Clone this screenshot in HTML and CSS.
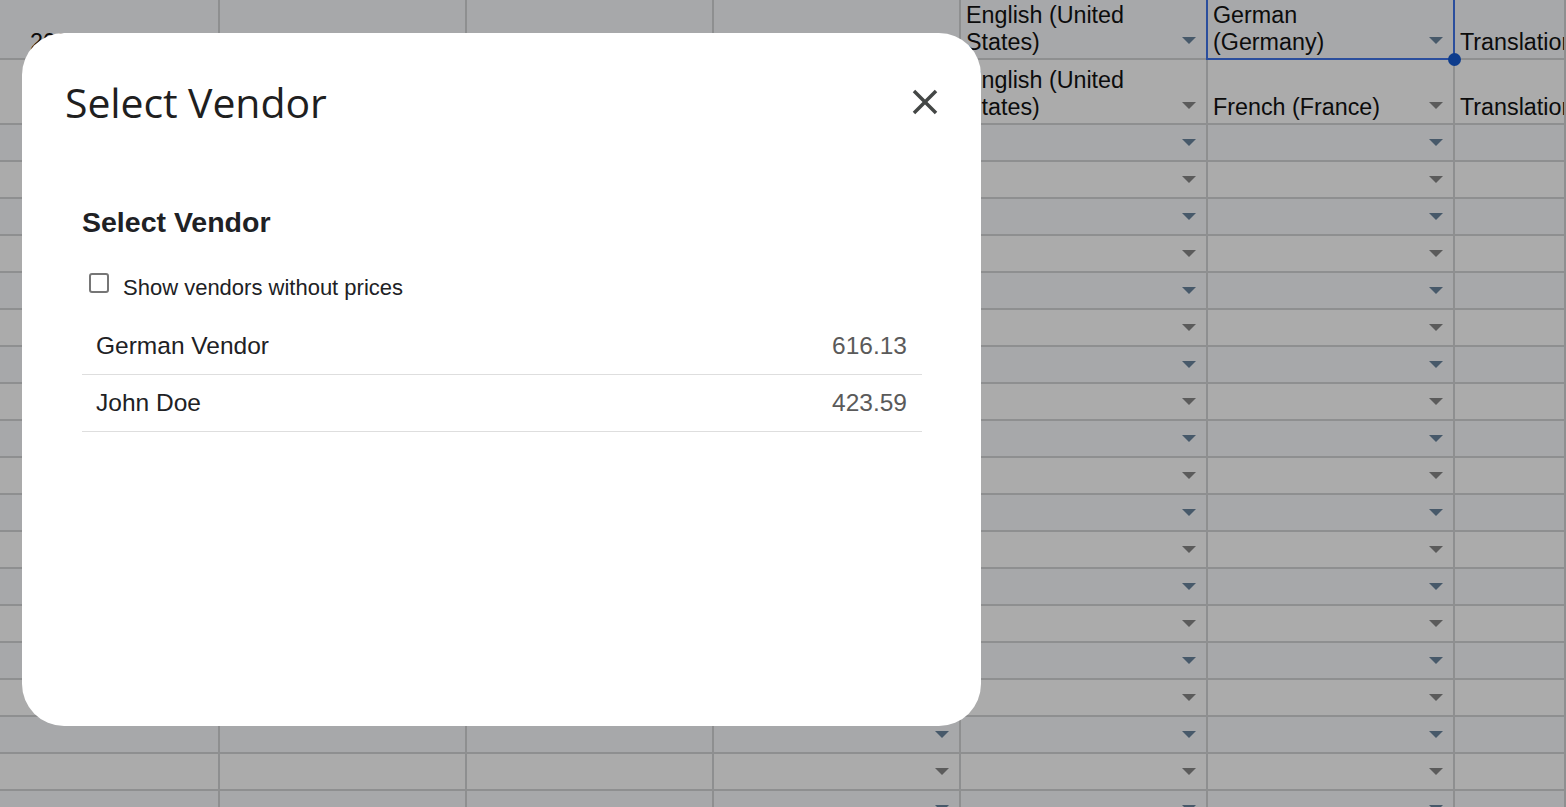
FILE: index.html
```html
<!DOCTYPE html>
<html lang="en">
<head>
<meta charset="utf-8">
<title>Select Vendor</title>
<link rel="stylesheet" href="styles.css">
</head>
<body>
<div class="sheet">
  <div class="row r-top even">
    <div class="c"><span class="t pad-a">2024</span></div>
    <div class="c"></div>
    <div class="c"></div>
    <div class="c"><i class="arr"></i></div>
    <div class="c"><span class="t">English (United States)</span><i class="arr"></i></div>
    <div class="c sel"><span class="t">German (Germany)</span><i class="arr"></i><span class="handle"></span></div>
    <div class="c"><span class="t nw">Translation</span></div>
  </div>
  <div class="row r-second odd">
    <div class="c"></div>
    <div class="c"></div>
    <div class="c"></div>
    <div class="c"><i class="arr"></i></div>
    <div class="c"><span class="t">English (United States)</span><i class="arr"></i></div>
    <div class="c"><span class="t">French (France)</span><i class="arr"></i></div>
    <div class="c"><span class="t nw">Translation</span></div>
  </div>
  <div class="row even"><div class="c"></div><div class="c"></div><div class="c"></div><div class="c"><i class="arr"></i></div><div class="c"><i class="arr"></i></div><div class="c"><i class="arr"></i></div><div class="c"></div></div>
  <div class="row odd"><div class="c"></div><div class="c"></div><div class="c"></div><div class="c"><i class="arr"></i></div><div class="c"><i class="arr"></i></div><div class="c"><i class="arr"></i></div><div class="c"></div></div>
  <div class="row even"><div class="c"></div><div class="c"></div><div class="c"></div><div class="c"><i class="arr"></i></div><div class="c"><i class="arr"></i></div><div class="c"><i class="arr"></i></div><div class="c"></div></div>
  <div class="row odd"><div class="c"></div><div class="c"></div><div class="c"></div><div class="c"><i class="arr"></i></div><div class="c"><i class="arr"></i></div><div class="c"><i class="arr"></i></div><div class="c"></div></div>
  <div class="row even"><div class="c"></div><div class="c"></div><div class="c"></div><div class="c"><i class="arr"></i></div><div class="c"><i class="arr"></i></div><div class="c"><i class="arr"></i></div><div class="c"></div></div>
  <div class="row odd"><div class="c"></div><div class="c"></div><div class="c"></div><div class="c"><i class="arr"></i></div><div class="c"><i class="arr"></i></div><div class="c"><i class="arr"></i></div><div class="c"></div></div>
  <div class="row even"><div class="c"></div><div class="c"></div><div class="c"></div><div class="c"><i class="arr"></i></div><div class="c"><i class="arr"></i></div><div class="c"><i class="arr"></i></div><div class="c"></div></div>
  <div class="row odd"><div class="c"></div><div class="c"></div><div class="c"></div><div class="c"><i class="arr"></i></div><div class="c"><i class="arr"></i></div><div class="c"><i class="arr"></i></div><div class="c"></div></div>
  <div class="row even"><div class="c"></div><div class="c"></div><div class="c"></div><div class="c"><i class="arr"></i></div><div class="c"><i class="arr"></i></div><div class="c"><i class="arr"></i></div><div class="c"></div></div>
  <div class="row odd"><div class="c"></div><div class="c"></div><div class="c"></div><div class="c"><i class="arr"></i></div><div class="c"><i class="arr"></i></div><div class="c"><i class="arr"></i></div><div class="c"></div></div>
  <div class="row even"><div class="c"></div><div class="c"></div><div class="c"></div><div class="c"><i class="arr"></i></div><div class="c"><i class="arr"></i></div><div class="c"><i class="arr"></i></div><div class="c"></div></div>
  <div class="row odd"><div class="c"></div><div class="c"></div><div class="c"></div><div class="c"><i class="arr"></i></div><div class="c"><i class="arr"></i></div><div class="c"><i class="arr"></i></div><div class="c"></div></div>
  <div class="row even"><div class="c"></div><div class="c"></div><div class="c"></div><div class="c"><i class="arr"></i></div><div class="c"><i class="arr"></i></div><div class="c"><i class="arr"></i></div><div class="c"></div></div>
  <div class="row odd"><div class="c"></div><div class="c"></div><div class="c"></div><div class="c"><i class="arr"></i></div><div class="c"><i class="arr"></i></div><div class="c"><i class="arr"></i></div><div class="c"></div></div>
  <div class="row even"><div class="c"></div><div class="c"></div><div class="c"></div><div class="c"><i class="arr"></i></div><div class="c"><i class="arr"></i></div><div class="c"><i class="arr"></i></div><div class="c"></div></div>
  <div class="row odd"><div class="c"></div><div class="c"></div><div class="c"></div><div class="c"><i class="arr"></i></div><div class="c"><i class="arr"></i></div><div class="c"><i class="arr"></i></div><div class="c"></div></div>
  <div class="row even"><div class="c"></div><div class="c"></div><div class="c"></div><div class="c"><i class="arr"></i></div><div class="c"><i class="arr"></i></div><div class="c"><i class="arr"></i></div><div class="c"></div></div>
  <div class="row odd"><div class="c"></div><div class="c"></div><div class="c"></div><div class="c"><i class="arr"></i></div><div class="c"><i class="arr"></i></div><div class="c"><i class="arr"></i></div><div class="c"></div></div>
  <div class="row even"><div class="c"></div><div class="c"></div><div class="c"></div><div class="c"><i class="arr"></i></div><div class="c"><i class="arr"></i></div><div class="c"><i class="arr"></i></div><div class="c"></div></div>
</div>

<div class="dialog" role="dialog" aria-labelledby="dlg-title">
  <div class="dlg-head">
    <h2 id="dlg-title" class="dlg-title">Select Vendor</h2>
    <button class="close" aria-label="Close">
      <svg viewBox="0 0 24 24" width="42" height="42"><path d="M19 6.41L17.59 5 12 10.59 6.41 5 5 6.41 10.59 12 5 17.59 6.41 19 12 13.41 17.59 19 19 17.59 13.41 12z" fill="#444746"/></svg>
    </button>
  </div>
  <div class="dlg-body">
    <h3 class="sub">Select Vendor</h3>
    <label class="check"><span class="box"></span><span class="lbl">Show vendors without prices</span></label>
    <ul class="vendors">
      <li class="vendor"><span class="name">German Vendor</span><span class="price">616.13</span></li>
      <li class="vendor"><span class="name">John Doe</span><span class="price">423.59</span></li>
    </ul>
  </div>
</div>
</body>
</html>
```

FILE: styles.css
```css
html, body {
  margin: 0;
  padding: 0;
}
body {
  width: 1566px;
  height: 807px;
  overflow: hidden;
  position: relative;
  background: #a9a9aa;
  font-family: "Liberation Sans", Arial, sans-serif;
}

/* ---------- spreadsheet backdrop ---------- */
.sheet {
  width: 1566px;
  height: 807px;
  overflow: hidden;
  display: flex;
  flex-direction: column;
}
.row {
  flex: none;
  display: grid;
  grid-template-columns: 220px 247px 247px 247px 247px 247px 111px;
  height: 37px;
}
.row.r-top { height: 60px; }
.row.r-second { height: 65px; }
.row.even { background: #a7a8aa; }
.row.odd { background: #ababab; }

.c {
  position: relative;
  box-sizing: border-box;
  border-right: 2px solid #8e8f90;
  border-bottom: 2px solid #8e8f90;
  display: flex;
  align-items: flex-end;
  min-width: 0;
}
.t {
  flex: 1 1 auto;
  min-width: 0;
  padding: 0 20px 2px 5px;
  font-size: 23.3px;
  line-height: 27px;
  color: #0c0c0c;
}
.t.pad-a { padding-left: 30px; }
.t.nw {
  white-space: nowrap;
  overflow: hidden;
  padding-right: 0;
}
.arr {
  flex: none;
  width: 0;
  height: 0;
  margin: 0 10px 14px auto;
  border-left: 7px solid transparent;
  border-right: 7px solid transparent;
  border-top: 7px solid #47596a;
}
.odd .arr { border-top-color: #5b5b5b; }

.sel::after {
  content: "";
  position: absolute;
  top: 0;
  left: -2px;
  right: -2px;
  bottom: -2px;
  border: 2px solid #2b4e9d;
  border-top: none;
  pointer-events: none;
}
.handle {
  position: absolute;
  right: -8px;
  bottom: -8px;
  width: 13px;
  height: 13px;
  border-radius: 50%;
  background: #0d3c8d;
  z-index: 2;
}

/* ---------- dialog ---------- */
.dialog {
  position: absolute;
  left: 22px;
  top: 33px;
  width: 959px;
  height: 693px;
  background: #ffffff;
  border-radius: 42px;
  overflow: hidden;
  z-index: 5;
}
.dlg-head {
  display: flex;
  align-items: center;
  justify-content: space-between;
  padding: 45px 35px 0 43px;
}
.dlg-title {
  margin: 0;
  font-family: "Open Sans", "Noto Sans", sans-serif;
  font-weight: 400;
  font-size: 41px;
  line-height: 48px;
  letter-spacing: -0.1px;
  color: #1f1f1f;
}
.close {
  width: 42px;
  height: 42px;
  padding: 0;
  border: none;
  background: transparent;
  display: flex;
  align-items: center;
  justify-content: center;
}
.close svg { display: block; }

.dlg-body {
  padding: 80px 59px 0 60px;
}
.sub {
  margin: 0;
  font-family: "Liberation Sans", Arial, sans-serif;
  font-weight: 700;
  font-size: 28.5px;
  line-height: 32px;
  color: #202124;
}
.check {
  display: flex;
  align-items: center;
  margin-top: 35px;
}
.box {
  flex: none;
  box-sizing: border-box;
  width: 20px;
  height: 20px;
  margin: 0 14px 10px 7px;
  border: 2px solid #767676;
  border-radius: 3px;
  background: #fff;
}
.lbl {
  font-size: 22px;
  line-height: 20px;
  color: #202124;
}
.vendors {
  list-style: none;
  margin: 15px 0 0;
  padding: 0;
}
.vendor {
  display: flex;
  justify-content: space-between;
  padding: 14px 15px 14px 14px;
  border-bottom: 1px solid #dedede;
  font-size: 24.5px;
  line-height: 28px;
}
.name { color: #202124; }
.price { color: #5a5a5a; }
```
